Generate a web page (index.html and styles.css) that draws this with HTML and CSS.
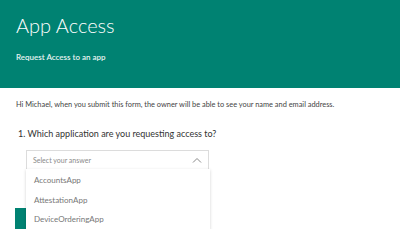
FILE: index.html
```html
<!DOCTYPE html>
<html lang="en">
<head>
    <meta charset="UTF-8">
    <title>App Access</title>
    <link rel="stylesheet" href="styles.css">
</head>
<body>
    <div class="header">
        <h1>App Access</h1>
        <p class="subtitle">Request Access to an app</p>
    </div>
    <div class="content">
        <p class="intro">Hi Michael, when you submit this form, the owner will be able to see your name and email address.</p>
        <div class="question">
            <div class="question-title">1. Which application are you requesting access to?</div>
            <div class="select-wrap">
                <div class="select">
                    <span class="placeholder">Select your answer</span>
                    <svg class="chevron" width="10" height="6" viewBox="0 0 10 6">
                        <path d="M1 5.5 L5 1.5 L9 5.5" fill="none" stroke="#888" stroke-width="1"/>
                    </svg>
                </div>
                <ul class="options">
                    <li>AccountsApp</li>
                    <li>AttestationApp</li>
                    <li>DeviceOrderingApp</li>
                </ul>
            </div>
        </div>
        <button class="submit" type="button"></button>
    </div>
</body>
</html>
```

FILE: styles.css
```css
body {
    margin: 0;
    font-family: Lato, "Open Sans", sans-serif;
    background-color: #ffffff;
    color: #333333;
}

.header {
    background-color: #008272;
    color: #ffffff;
    height: 88px;
    padding: 10px 16px 0;
    box-sizing: border-box;
}

.header h1 {
    margin: 0;
    font-size: 20px;
    font-weight: 300;
    line-height: 30px;
}

.subtitle {
    margin: 12px 0 0;
    font-size: 8px;
    font-weight: 600;
    color: #e6f3f1;
}

.content {
    padding: 12px 16px 0 16px;
}

.intro {
    margin: 0;
    font-size: 7.4px;
    color: #444444;
}

.question {
    margin-top: 19px;
    padding-left: 2px;
}

.question-title {
    font-size: 9px;
    color: #333333;
}

.select-wrap {
    position: relative;
    margin: 11px 0 0 8px;
    width: 183px;
}

.select {
    height: 18px;
    border: 1px solid #dcdcdc;
    display: flex;
    align-items: center;
    justify-content: space-between;
    padding: 0 6px;
}

.placeholder {
    font-size: 7px;
    color: #8a8a8a;
}

.options {
    position: absolute;
    top: 19px;
    left: 0;
    right: -1px;
    margin: 0;
    padding: 2px 0 0;
    list-style: none;
    background-color: #ffffff;
    box-shadow: 0 1px 3px rgba(0, 0, 0, 0.18);
}

.options li {
    height: 19.7px;
    line-height: 19.7px;
    padding-left: 8px;
    font-size: 8px;
    color: #777777;
}

.submit {
    display: block;
    margin-top: 38px;
    width: 40px;
    height: 21px;
    border: none;
    background-color: #008272;
    margin-left: -1px;
}
```
